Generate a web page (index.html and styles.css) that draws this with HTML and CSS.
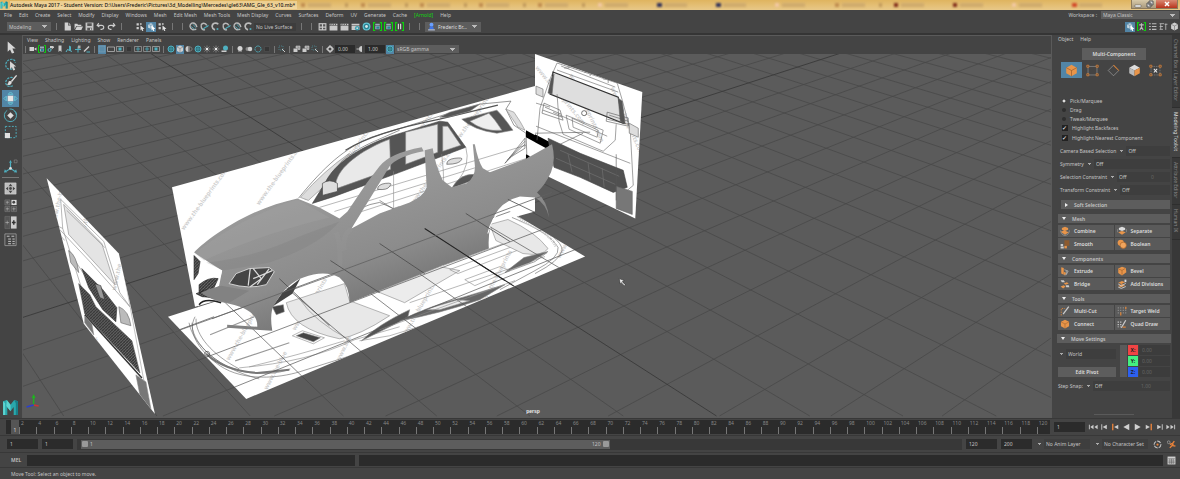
FILE: index.html
```html
<!DOCTYPE html>
<html lang="en">
<head>
  <meta charset="UTF-8">
  <title>Autodesk Maya 2017</title>
  <link rel="stylesheet" href="styles.css">
</head>
<body>
  <!-- Icon set -->
  <svg class="defs" aria-hidden="true">
    <symbol id="new" viewBox="0 0 16 16"><path d="M3 1h6v5h5v9H3z" fill="#d0d0d0"/><path d="M10 1l4 4h-4z" fill="#bbb"/></symbol>
    <symbol id="open" viewBox="0 0 16 16"><path d="M1 3h5l1 2h6v2H4l-3 6zM5 8h11l-3 6H2z" fill="#d0d0d0"/></symbol>
    <symbol id="save" viewBox="0 0 16 16"><path d="M1 1h14v14H1z" fill="#c4c4c4"/><path d="M4 2h8v5H4zM4 10h8v5H4z" fill="#555"/><path d="M9 11h2v3H9z" fill="#ddd"/></symbol>
    <symbol id="undo" viewBox="0 0 16 16"><path d="M5 2L2 6l4 3M2 6h8c5 0 5 7 0 7H8" fill="none" stroke="#ccc" stroke-width="2"/></symbol>
    <symbol id="redo" viewBox="0 0 16 16"><path d="M11 2l3 4-4 3M14 6H6c-5 0-5 7 0 7h2" fill="none" stroke="#ccc" stroke-width="2"/></symbol>
    <symbol id="pick" viewBox="0 0 16 16"><path d="M1 2h4v4H1zM7 2h3v3H7zM1 9h4v4H1z" fill="#ccc"/><path d="M8 6l7 6-3 .5 1 3-2 .5-1.500-3L8 15z" fill="#e4e4e4"/></symbol>
    <symbol id="cubes" viewBox="0 0 16 16"><path d="M2 4l5-2 4 2v5l-4 3-5-2z" fill="#c9d9e2"/><path d="M2 4l5 2v6M7 6l4-2" stroke="#467799" fill="none"/><path d="M8 6l7 6-3 .5 1 3-2 .5-1.500-3L8 15z" fill="#fff"/></symbol>
    <symbol id="magnet" viewBox="0 0 16 16"><path d="M13 13L7 14C1 12 0 5 5 2c5-1 8 3 9 7" fill="none" stroke="#b9b9b9" stroke-width="2.500"/><path d="M4 8l6 5M7 4l5 6" stroke="#4fb0c0" stroke-width="1.500"/></symbol>
    <symbol id="curve" viewBox="0 0 16 16"><path d="M2 6c1-5 8-5 10 0M2 6c0 5 3 8 7 8" fill="none" stroke="#b9b9b9" stroke-width="2.500"/><path d="M6 13c2-5 5-2 9-7" fill="none" stroke="#4fb0c0" stroke-width="2"/></symbol>
    <symbol id="hook" viewBox="0 0 16 16"><path d="M13 4C9 0 2 2 2 8c0 3 3 5 5 6" fill="none" stroke="#bbb" stroke-width="3"/><path d="M10 11h3v3h-3z" fill="#4fb0c0"/></symbol>
    <symbol id="clap" viewBox="0 0 16 16"><path d="M1 3h14v3H1zM1 7h14v8H1z" fill="#c9c9c9"/><path d="M4 3l-1 3M8 3L7 6M12 3l-1 3" stroke="#444" stroke-width="1.500"/></symbol>
    <symbol id="film" viewBox="0 0 16 16"><path d="M1 2h14v13H1z" fill="#c9c9c9"/><path d="M3 4h4v4H3zM9 4h4v4H9zM3 10h4v3H3zM9 10h4v3H9z" fill="#555"/></symbol>
    <symbol id="clapteal" viewBox="0 0 16 16"><path d="M1 3h14v3H1zM1 7h14v7H1z" fill="#c9c9c9"/><circle cx="11" cy="11" r="4" fill="#3d9fb0"/><circle cx="11" cy="11" r="1.500" fill="#ddd"/></symbol>
    <symbol id="ring" viewBox="0 0 16 16"><circle cx="8" cy="8" r="6" fill="#2b8292" stroke="#62c6d4" stroke-width="2"/><circle cx="8" cy="8" r="2.500" fill="#d8e8ea"/></symbol>
    <symbol id="gclap" viewBox="0 0 16 16"><path d="M4 3h8v3H4zM4 7h8v6H4z" fill="#9ab"/><path d="M4 1H1v14h3M12 1h3v14h-3" fill="none" stroke="#0bd30b" stroke-width="2"/><path d="M6 8h5v4H6z" fill="#278795"/></symbol>
    <symbol id="gpause" viewBox="0 0 16 16"><path d="M5 3h2v10H5zM9 3h2v10H9z" fill="#ddd"/><path d="M4 1H1v14h3M12 1h3v14h-3" fill="none" stroke="#0bd30b" stroke-width="2"/></symbol>
    <symbol id="gman" viewBox="0 0 16 16"><path d="M8 2v7M4 5h8M8 9l-3 5M8 9l3 5" stroke="#bbb" stroke-width="2" fill="none"/><path d="M4 1H1v14h3M12 1h3v14h-3" fill="none" stroke="#0bd30b" stroke-width="2"/></symbol>
    <symbol id="cam" viewBox="0 0 16 16"><path d="M1 4h9v8H1zM11 7l4-2v6l-4-2z" fill="#d0d0d0"/></symbol>
    <symbol id="camteal" viewBox="0 0 16 16"><path d="M6 2h7v4H6z" fill="#ccc"/><circle cx="5" cy="10" r="3" fill="none" stroke="#4fb0c0" stroke-width="2"/><path d="M9 8l5-4" stroke="#ccc" stroke-width="2"/></symbol>
    <symbol id="mark" viewBox="0 0 16 16"><path d="M5 1h6v13l-3-3-3 3z" fill="#ccc"/></symbol>
    <symbol id="plane" viewBox="0 0 16 16"><path d="M8 1l4 2v8l-4-1z" fill="#4fb0c0"/><path d="M2 14l3-5 9 4" stroke="#5cb8c8" stroke-width="2" fill="none"/></symbol>
    <symbol id="pan" viewBox="0 0 16 16"><path d="M2 9h12M8 3v12" stroke="#4fb0c0" stroke-width="2"/><path d="M8 1h5v6H8z" fill="#aaa"/></symbol>
    <symbol id="pencil" viewBox="0 0 16 16"><path d="M2 13L12 3" stroke="#ccc" stroke-width="3"/><path d="M7 14h7" stroke="#4fb0c0" stroke-width="2"/></symbol>
    <symbol id="sq" viewBox="0 0 16 16"><path d="M2 2h12v12H2z" fill="#5c8ca8" stroke="#85a7b9"/></symbol>
    <symbol id="gate" viewBox="0 0 16 16"><path d="M1 4h14v9H1z" fill="none" stroke="#bbb" stroke-width="1.500"/></symbol>
    <symbol id="gatedot" viewBox="0 0 16 16"><path d="M1 3h14v10H1z" fill="none" stroke="#aaa" stroke-width="1.500"/><path d="M5 5h6v6H5z" fill="#4fb0c0"/></symbol>
    <symbol id="dim" viewBox="0 0 16 16"><path d="M3 3h10v10H3z" fill="#363636" stroke="#575757"/></symbol>
    <symbol id="gatex" viewBox="0 0 16 16"><path d="M1 3h14v10H1z" fill="none" stroke="#999" stroke-width="1.500"/><path d="M4 8h8M8 3v10" stroke="#4fb0c0" stroke-width="1.500"/></symbol>
    <symbol id="globe" viewBox="0 0 16 16"><circle cx="8" cy="8" r="6" fill="#2e6b75" stroke="#4fb0c0" stroke-width="2"/><path d="M8 2v12M2 8h12" stroke="#4fb0c0"/></symbol>
    <symbol id="box" viewBox="0 0 16 16"><path d="M8 1l6 3v8l-6 3-6-3V4z" fill="#d0d0d0"/><path d="M2 4l6 3 6-3M8 7v8" stroke="#666" fill="none"/></symbol>
    <symbol id="half" viewBox="0 0 16 16"><path d="M7 2a6 6 0 0 0 0 12z" fill="#ccc"/><path d="M9 3l5 3v4l-5 3z" fill="none" stroke="#aaa"/></symbol>
    <symbol id="burst" viewBox="0 0 16 16"><circle cx="8" cy="8" r="2.500" fill="#eee"/><path d="M8 1v4M8 11v4M1 8h4M11 8h4M3 3l3 3M10 10l3 3M3 13l3-3M10 6l3-3" stroke="#bbb"/></symbol>
    <symbol id="shade" viewBox="0 0 16 16"><circle cx="9" cy="6" r="5" fill="#4fb0c0"/><path d="M1 11h10v3H1z" fill="#ccc"/></symbol>
    <symbol id="ball" viewBox="0 0 16 16"><circle cx="8" cy="7" r="5" fill="#d5d5d5"/><path d="M4 13h8" stroke="#777" stroke-width="2"/></symbol>
    <symbol id="balls" viewBox="0 0 16 16"><circle cx="5" cy="8" r="4" fill="#888"/><circle cx="10" cy="8" r="4.500" fill="#d0d0d0"/></symbol>
    <symbol id="circ" viewBox="0 0 16 16"><circle cx="8" cy="8" r="6" fill="none" stroke="#4fb0c0" stroke-width="2" stroke-dasharray="3 1"/></symbol>
    <symbol id="dash" viewBox="0 0 16 16"><path d="M2 2h8v8H2z" fill="none" stroke="#4fb0c0" stroke-dasharray="2"/><path d="M8 8l6 6" stroke="#ccc" stroke-width="2"/></symbol>
    <symbol id="layers" viewBox="0 0 16 16"><path d="M1 7h8v7H1z" fill="#ccc"/><path d="M6 2h8v7h-4V6H6z" fill="#999" stroke="#ddd"/></symbol>
    <symbol id="gear" viewBox="0 0 16 16"><circle cx="8" cy="8" r="4.500" fill="none" stroke="#ccc" stroke-width="3"/><path d="M8 0v3M8 13v3M0 8h3M13 8h3" stroke="#ccc" stroke-width="2"/></symbol>
    <symbol id="gamma" viewBox="0 0 16 16"><path d="M12 2a6 6 0 0 0 0 12z" fill="#ccc"/><path d="M1 8h5" stroke="#bbb" stroke-width="2"/></symbol>
    <symbol id="person" viewBox="0 0 16 16"><circle cx="8" cy="5" r="3.500" fill="#6aa0ff"/><path d="M5 8h6l1 5H4z" fill="#3e75ea"/><path d="M2 13h12v2H2z" fill="#b8c4dd"/></symbol>
    <symbol id="lines" viewBox="0 0 16 16"><path d="M2 3h3M7 3h8M2 8h3M7 8h8M2 13h3M7 13h8" stroke="#bbb" stroke-width="2"/></symbol>
    <symbol id="tsq" viewBox="0 0 16 16"><path d="M1 3h8M3 3v10M1 8h6M1 13h6M12 3v11M10 4h5" stroke="#bbb" stroke-width="1.500"/></symbol>
    <!-- left tool box -->
    <symbol id="arrow" viewBox="0 0 32 32"><path d="M10 3v22l5-5 4 9 5-2-4-9h7z" fill="#d6d6d6"/></symbol>
    <symbol id="lasso" viewBox="0 0 32 32"><path d="M20 25C10 29 3 21 7 12 12 2 27 3 26 12" fill="none" stroke="#4fb0c0" stroke-width="2.500" stroke-dasharray="5 2"/><path d="M15 9v17l4-4 3 7 4-2-3-7h5z" fill="#d6d6d6"/></symbol>
    <symbol id="brush" viewBox="0 0 32 32"><path d="M21 25C10 30 3 22 7 14c3-6 10-8 14-6" fill="none" stroke="#4fb0c0" stroke-width="2.500" stroke-dasharray="5 2"/><path d="M29 3L18 16" stroke="#ddd" stroke-width="3"/><path d="M12 16c5-3 8 1 6 4-3 4-7 4-10 2 4-1 3-4 4-6z" fill="#ddd"/></symbol>
    <symbol id="move" viewBox="0 0 32 32"><path d="M10 10h12v12H10z" fill="#e5e5e5"/><path d="M11 7l5-5 5 5zM11 25l5 5 5-5zM7 11l-5 5 5 5zM25 11l5 5-5 5z" fill="none" stroke="#66c5d6" stroke-width="2"/></symbol>
    <symbol id="rotate" viewBox="0 0 32 32"><path d="M16 9l7 7-7 7-7-7z" fill="#ddd"/><path d="M9 5a13 13 0 1 0 15 1M14 2a14 14 0 0 1 15 12" fill="none" stroke="#4fb0c0" stroke-width="2"/></symbol>
    <symbol id="scale" viewBox="0 0 32 32"><path d="M5 3h23v24H5z" fill="none" stroke="#4fb0c0" stroke-width="2" stroke-dasharray="4 3"/><path d="M4 17h11v11H4z" fill="#e0e0e0"/></symbol>
    <symbol id="axes" viewBox="0 0 32 32"><path d="M16 20V7M16 20l9 6M16 20l-9 6" stroke="#4fb0c0" stroke-width="2.500"/><path d="M13 8l3-6 3 6zM4 22l-2 7 7-1zM28 22l2 7-7-1z" fill="#4fb0c0"/><circle cx="16" cy="20" r="3" fill="#ddd"/><path d="M24 2h6v6h-6z" fill="none" stroke="#999"/></symbol>
    <symbol id="persp" viewBox="0 0 32 32"><path d="M4 4h24v24H4z" fill="#bdbdbd" stroke="#ddd"/><path d="M16 6l4 5h-8zM16 26l4-5h-8zM6 16l5-4v8zM26 16l-5-4v8z" fill="#444"/><circle cx="16" cy="16" r="3" fill="#444"/></symbol>
    <symbol id="four" viewBox="0 0 32 32"><path d="M4 4h11v11H4zM4 18h11v11H4zM18 18h11v11H18z" fill="#555" stroke="#888"/><path d="M18 4h11v11H18z" fill="#ddd"/><path d="M9 6v7M6 9h7M9 20v7M6 23h7M23 20v7M20 23h7" stroke="#ccc"/><circle cx="23" cy="9" r="3" fill="#444"/></symbol>
    <symbol id="two" viewBox="0 0 32 32"><path d="M4 3h11v26H4z" fill="#555" stroke="#777"/><path d="M17 3h12v26H17z" fill="#ccc"/><path d="M9 12v8M5 16h8" stroke="#ccc"/><path d="M19 16h8M23 11v10" stroke="#333" stroke-width="3"/></symbol>
    <symbol id="list" viewBox="0 0 32 32"><path d="M4 4h24v25H4z" fill="none" stroke="#aaa" stroke-width="1.500"/><path d="M8 9h6M11 15h6M11 20h6M11 25h6M18 9h6M20 15h5M20 20h5M20 25h5" stroke="#ccc" stroke-width="2"/></symbol>
    <symbol id="maya" viewBox="0 0 32 32"><path d="M2 4l7-2 7 9 7-9 7 2v26h-8V15l-6 8-6-8v15H2z" fill="#2aa8ac"/><path d="M2 4l4 4v22H2zM9 2l7 9v12L8 13z" fill="#5ed2cf"/><path d="M23 2l7 2v26h-4V8z" fill="#187e87"/></symbol>
    <!-- modeling kit -->
    <symbol id="ocube" viewBox="0 0 32 32"><path d="M16 2l13 7v14l-13 7-13-7V9z" fill="#e8954a"/><path d="M3 9l13 7 13-7M16 16v14" fill="none" stroke="#8c5426" stroke-width="1.500"/></symbol>
    <symbol id="verts" viewBox="0 0 32 32"><path d="M5 6h22v21H5z" fill="none" stroke="#999" stroke-width="1.500"/><path d="M2 3h5v5H2zM25 3h5v5h-5zM2 24h5v5H2zM25 24h5v5h-5z" fill="#444" stroke="#d98339" stroke-width="2"/></symbol>
    <symbol id="edge" viewBox="0 0 32 32"><path d="M29 16L16 29 3 16 16 3" fill="none" stroke="#aaa" stroke-width="1.500"/><path d="M16 3l13 13" stroke="#d98339" stroke-width="2.500"/></symbol>
    <symbol id="face" viewBox="0 0 32 32"><path d="M16 2l13 7-13 7L3 9z" fill="#ddd"/><path d="M3 9l13 7v14L3 23z" fill="#bababa"/><path d="M29 9l-13 7v14l13-7z" fill="#e8954a"/></symbol>
    <symbol id="uvs" viewBox="0 0 32 32"><path d="M5 6h22v21H5z" fill="none" stroke="#888" stroke-width="1.500" stroke-dasharray="4 2"/><path d="M2 3h5v5H2zM25 3h5v5h-5zM2 24h5v5H2zM25 24h5v5h-5z" fill="#444" stroke="#d98339" stroke-width="2"/><path d="M12 12l8 9M20 12l-8 9" stroke="#eee" stroke-width="2.500"/></symbol>
    <symbol id="combine" viewBox="0 0 16 16"><path d="M3 3l5-2 5 2v3L8 8 3 6zM1 9l6-2 7 3-6 4z" fill="#e8954a"/><path d="M1 7c0 4 3 8 7 8s7-4 7-8" stroke="#aaa" fill="none"/></symbol>
    <symbol id="separate" viewBox="0 0 16 16"><path d="M3 3l5-2 5 2v3L8 8 3 6z" fill="#ddd"/><path d="M2 10l6-2 6 2-6 4z" fill="#e8954a"/><path d="M1 5v5M15 5v5" stroke="#999"/></symbol>
    <symbol id="smooth" viewBox="0 0 16 16"><path d="M7 2h8v9H7z" fill="#8b5a30"/><path d="M1 8h4v3H1zM1 12h5v3H1z" fill="#ccc"/><path d="M7 11h4v4H7z" fill="#e8954a"/></symbol>
    <symbol id="boolean" viewBox="0 0 16 16"><circle cx="6" cy="6" r="5" fill="#e8954a"/><circle cx="10" cy="10" r="5" fill="#f0a55e" stroke="#a76025"/></symbol>
    <symbol id="extrude" viewBox="0 0 16 16"><path d="M2 2l4 1v11l-4-2z" fill="#e8954a"/><path d="M7 6l6 2-3 6H7M10 8v5" stroke="#ccc" fill="none"/><path d="M6 9l4 2-3 4z" fill="#e8954a"/></symbol>
    <symbol id="bevel" viewBox="0 0 16 16"><path d="M8 1l6 2 1 7-7 5-6-4V4z" fill="#e8954a"/><path d="M3 5l5 2 5-3M8 7v7" stroke="#9a5c28" fill="none"/></symbol>
    <symbol id="bridge" viewBox="0 0 16 16"><path d="M1 2h5l2 3H3zM9 10h5l1 3h-5z" fill="#ccc"/><path d="M6 7l5-2 3 2-5 2zM1 12l5-2 3 2-4 3z" fill="#e8954a"/></symbol>
    <symbol id="divide" viewBox="0 0 16 16"><path d="M2 6l6-3 5 2-6 3zM2 11l6-3 5 2-6 3z" fill="#e8954a"/><path d="M2 8l5 3 7-4M2 13l5 2 7-3" stroke="#ccc" stroke-width="1.500" fill="none"/><path d="M12 1h3v4h-3z" fill="#ddd"/></symbol>
    <symbol id="cut" viewBox="0 0 16 16"><path d="M2 15V4h6" stroke="#d98339" stroke-dasharray="2" stroke-width="1.500" fill="none"/><path d="M14 1L5 13" stroke="#ccc" stroke-width="2"/></symbol>
    <symbol id="weld" viewBox="0 0 16 16"><path d="M2 2v12M6 2v12M10 2v12M14 2v12" stroke="#bbb" stroke-dasharray="2 2"/><path d="M6 10v5M14 1v4" stroke="#d98339" stroke-width="2"/></symbol>
    <symbol id="quad" viewBox="0 0 16 16"><path d="M2 4v9M6 4v9" stroke="#ccc" stroke-width="2" stroke-dasharray="2"/><path d="M14 2L7 14" stroke="#ccc" stroke-width="2"/><path d="M9 13h5" stroke="#d98339" stroke-width="2"/></symbol>
    <!-- playback -->
    <symbol id="p1" viewBox="0 0 24 16"><path d="M3 3v10" stroke="#ccc" stroke-width="2"/><path d="M21 3l-7 5 7 5zM12 3L5 8l7 5z" fill="#ccc"/></symbol>
    <symbol id="p2" viewBox="0 0 24 16"><path d="M6 2v12" stroke="#ccc" stroke-width="2"/><path d="M17 3L8 8l9 5z" fill="#ccc"/></symbol>
    <symbol id="p3" viewBox="0 0 24 16"><path d="M6 1v14" stroke="#e8823a" stroke-width="3"/><path d="M18 3L9 8l9 5z" fill="#ccc"/></symbol>
    <symbol id="p4" viewBox="0 0 24 16"><path d="M18 1L5 8l13 7z" fill="#d0d0d0"/></symbol>
    <symbol id="orbit" viewBox="0 0 16 16"><circle cx="8" cy="8" r="6" stroke="#bbb" stroke-width="2" fill="none" stroke-dasharray="7 2"/><circle cx="8" cy="8" r="2" fill="#e8823a"/></symbol>
    <symbol id="run" viewBox="0 0 16 16"><circle cx="3" cy="4" r="2.500" fill="none" stroke="#bbb"/><path d="M13 2l-3 4-5 2M10 6l1 4 4 1M10 9l-5 5" stroke="#e8823a" stroke-width="2.500" fill="none"/></symbol>
    <symbol id="grid" viewBox="0 0 16 16"><path d="M1 1h14v14H1z" fill="#d0d0d0"/><path d="M2 5h12M2 9h12M2 12h12M5 5v9M8 5v9M11 5v9" stroke="#555"/></symbol>
  </svg>

  <header class="titlebar">
    <svg class="ico"><use href="#maya"/></svg>
    <h1>Autodesk Maya 2017 - Student Version: D:\Users\Frederic\Pictures\3d_Modelling\Mercedes\gle63\AMG_Gle_63_v10.mb*</h1>
    <div class="ghosts">
      <i></i><i></i><i></i><i></i><i></i><i class="pink"></i><i class="navy"></i><i class="navy"></i><i class="pink"></i><i></i><i class="wine"></i><i class="wine"></i><i class="pink"></i><i class="red"></i>
    </div>
    <div class="winbtns">
      <button aria-label="Minimize"><svg viewBox="0 0 12 8"><path d="M3 5h6v2H3z" fill="#fff" stroke="#555" stroke-width=".5"/></svg></button>
      <button aria-label="Restore"><svg viewBox="0 0 12 8"><path d="M5 1h4v4H5zM3 3h4v4H3z" fill="#ddd" stroke="#555"/></svg></button>
      <button class="close" aria-label="Close"><svg viewBox="0 0 12 8"><path d="M4 2l4 4M8 2L4 6" stroke="#fff" stroke-width="1.500"/></svg></button>
    </div>
  </header>

  <div class="menurow">
    <nav class="menu">
      <a href="#">File</a><a href="#">Edit</a><a href="#">Create</a><a href="#">Select</a><a href="#">Modify</a><a href="#">Display</a><a href="#">Windows</a><a href="#">Mesh</a><a href="#">Edit Mesh</a><a href="#">Mesh Tools</a><a href="#">Mesh Display</a><a href="#">Curves</a><a href="#">Surfaces</a><a href="#">Deform</a><a href="#">UV</a><a href="#">Generate</a><a href="#">Cache</a><a href="#" class="arnold">[Arnold]</a><a href="#">Help</a>
    </nav>
    <label class="workspace">Workspace : <select><option>Maya Classic</option></select></label>
  </div>

  <div class="status">
    <select class="mode" aria-label="Menu set"><option>Modeling</option></select>
    <span class="sep"></span>
    <button aria-label="New scene"><svg><use href="#new"/></svg></button>
    <button aria-label="Open scene"><svg><use href="#open"/></svg></button>
    <button aria-label="Save scene"><svg><use href="#save"/></svg></button>
    <button aria-label="Undo"><svg><use href="#undo"/></svg></button>
    <button aria-label="Redo"><svg><use href="#redo"/></svg></button>
    <span class="sep wide"></span>
    <button aria-label="Select by hierarchy"><svg><use href="#pick"/></svg></button>
    <button class="on" aria-label="Select by object"><svg><use href="#cubes"/></svg></button>
    <button aria-label="Select by component"><svg><use href="#pick"/></svg></button>
    <span class="sep"></span><span class="sep"></span>
    <button aria-label="Snap to grids"><svg><use href="#magnet"/></svg></button>
    <button aria-label="Snap to curves"><svg><use href="#curve"/></svg></button>
    <button aria-label="Snap to points"><svg><use href="#hook"/></svg></button>
    <button aria-label="Snap to center"><svg><use href="#curve"/></svg></button>
    <button aria-label="Snap to planes"><svg><use href="#magnet"/></svg></button>
    <button aria-label="Make live"><svg><use href="#hook"/></svg></button>
    <input class="live" aria-label="Live surface" value="No Live Surface" readonly>
    <span class="sep"></span><span class="sep"></span>
    <button aria-label="Open render view"><svg><use href="#film"/></svg></button>
    <button aria-label="Render frame"><svg><use href="#clap"/></svg></button>
    <button aria-label="IPR render"><svg><use href="#clap"/></svg></button>
    <button aria-label="Render settings"><svg><use href="#clapteal"/></svg></button>
    <button aria-label="Hypershade"><svg><use href="#ring"/></svg></button>
    <button aria-label="Render setup"><svg><use href="#gclap"/></svg></button>
    <button aria-label="Light editor"><svg><use href="#gclap"/></svg></button>
    <button aria-label="Pause"><svg><use href="#gpause"/></svg></button>
    <span class="sep"></span><span class="sep"></span>
    <div class="user"><svg class="ico"><use href="#person"/></svg><select aria-label="Account"><option>Frederic Br...</option></select></div>
    <div class="sidebtns">
      <button class="on" aria-label="Modeling toolkit"><svg><use href="#cubes"/></svg></button>
      <button aria-label="Human IK"><svg><use href="#gman"/></svg></button>
      <button aria-label="Attributes"><svg><use href="#lines"/></svg></button>
      <button aria-label="Tool settings"><svg><use href="#tsq"/></svg></button>
      <button aria-label="Channel box"><svg><use href="#box"/></svg></button>
    </div>
  </div>

  <main>
    <aside class="toolbox">
      <button aria-label="Select"><svg><use href="#arrow"/></svg></button>
      <button aria-label="Lasso"><svg><use href="#lasso"/></svg></button>
      <button aria-label="Paint select"><svg><use href="#brush"/></svg></button>
      <button class="on" aria-label="Move"><svg><use href="#move"/></svg></button>
      <button aria-label="Rotate"><svg><use href="#rotate"/></svg></button>
      <button aria-label="Scale"><svg><use href="#scale"/></svg></button>
      <button class="last" aria-label="Last tool"><svg><use href="#axes"/></svg></button>
      <hr>
      <button aria-label="Perspective"><svg><use href="#persp"/></svg></button>
      <button aria-label="Four view"><svg><use href="#four"/></svg></button>
      <button aria-label="Two view"><svg><use href="#two"/></svg></button>
      <button aria-label="Outliner"><svg><use href="#list"/></svg></button>
      <svg class="logo"><use href="#maya"/></svg>
    </aside>

    <section class="panel">
      <nav class="menu">
        <a href="#">View</a><a href="#">Shading</a><a href="#">Lighting</a><a href="#">Show</a><a href="#">Renderer</a><a href="#">Panels</a>
      </nav>
      <div class="viewbar">
        <span class="sep"></span>
        <button aria-label="Camera"><svg><use href="#cam"/></svg></button>
        <button aria-label="Lock camera"><svg><use href="#gclap"/></svg></button>
        <button aria-label="Camera attributes"><svg><use href="#camteal"/></svg></button>
        <button aria-label="Bookmark"><svg><use href="#mark"/></svg></button>
        <button aria-label="Image plane"><svg><use href="#plane"/></svg></button>
        <button aria-label="Pan zoom"><svg><use href="#pan"/></svg></button>
        <button aria-label="Grease pencil"><svg><use href="#pencil"/></svg></button>
        <span class="sep"></span>
        <button class="on" aria-label="Grid"><svg><use href="#sq"/></svg></button>
        <button aria-label="Film gate"><svg><use href="#gate"/></svg></button>
        <button aria-label="Resolution gate"><svg><use href="#gatedot"/></svg></button>
        <button aria-label="Gate mask"><svg><use href="#dim"/></svg></button>
        <button aria-label="Field chart"><svg><use href="#gatex"/></svg></button>
        <button aria-label="Safe action"><svg><use href="#gatex"/></svg></button>
        <button aria-label="Safe title"><svg><use href="#gatedot"/></svg></button>
        <span class="sep"></span>
        <button aria-label="Wireframe"><svg><use href="#globe"/></svg></button>
        <button class="on" aria-label="Smooth shade"><svg><use href="#box"/></svg></button>
        <button aria-label="Default material"><svg><use href="#half"/></svg></button>
        <button aria-label="Textured"><svg><use href="#globe"/></svg></button>
        <button aria-label="Use all lights"><svg><use href="#burst"/></svg></button>
        <button aria-label="Shadows"><svg><use href="#burst"/></svg></button>
        <button aria-label="Occlusion"><svg><use href="#shade"/></svg></button>
        <span class="sep"></span>
        <button aria-label="Motion blur"><svg><use href="#ball"/></svg></button>
        <button aria-label="Anti-aliasing"><svg><use href="#balls"/></svg></button>
        <button aria-label="Depth of field"><svg><use href="#circ"/></svg></button>
        <button aria-label="Isolate"><svg><use href="#dim"/></svg></button>
        <span class="sep"></span>
        <button aria-label="X-ray"><svg><use href="#dash"/></svg></button>
        <span class="sep"></span>
        <button aria-label="X-ray joints"><svg><use href="#layers"/></svg></button>
        <button aria-label="X-ray components"><svg><use href="#layers"/></svg></button>
        <button aria-label="Backfaces"><svg><use href="#dash"/></svg></button>
        <span class="sep"></span>
        <button aria-label="Exposure"><svg><use href="#gear"/></svg></button>
        <input aria-label="Exposure value" value="0.00">
        <button aria-label="Gamma"><svg><use href="#gamma"/></svg></button>
        <input aria-label="Gamma value" value="1.00">
        <button class="on" aria-label="View transform"><svg><use href="#globe"/></svg></button>
        <select aria-label="Color space"><option>sRGB gamma</option></select>
      </div>

      <!-- 3D scene -->
      <svg class="scene" viewBox="23 54 1028 362" preserveAspectRatio="xMidYMid slice">
        <defs>
          <linearGradient id="paint" gradientUnits="userSpaceOnUse" x1="340" y1="170" x2="385" y2="300">
            <stop offset="0" stop-color="#9b9b9b"/><stop offset=".4" stop-color="#929292"/><stop offset=".65" stop-color="#8c8c8c"/><stop offset="1" stop-color="#767676"/>
          </linearGradient>
          <pattern id="mesh" width="3" height="3" patternUnits="userSpaceOnUse"><path d="M0 0h3v3H0z" fill="#3a3a3a"/><path d="M0 3l3-3" stroke="#909090" stroke-width=".6"/></pattern>
          <clipPath id="ground"><path d="M169 316L247 398 585 256 505 208z"/></clipPath>
          <clipPath id="sideclip"><path d="M173 187L535 86V211L196 306z"/></clipPath>
          <clipPath id="rearclip"><path d="M535 54L642 92 635 218 535 170z"/></clipPath>
          <clipPath id="frontclip"><path d="M48 178L120 253 156 413 85 323z"/></clipPath>
          <g id="floor" fill="none">
            <path d="M-1945 415L1945-304M-1834 415L1945-304M-1723 415L1945-304M-1612 415L1945-304M-1501 415L1945-304M-1390 415L1945-304M-1279 415L1945-304M-1168 415L1945-304M-1057 415L1945-304M-946 415L1945-304M-835 415L1945-304M-724 415L1945-304M-613 415L1945-304M-502 415L1945-304M-391 415L1945-304M-169 415L1945-304M-58 415L1945-304M53 415L1945-304M164 415L1945-304M275 415L1945-304M386 415L1945-304M497 415L1945-304M608 415L1945-304M719 415L1945-304M830 415L1945-304M941 415L1945-304M1052 415L1945-304"/>
            <path d="M-28 415L-406-304M65 415L-406-304M158 415L-406-304M251 415L-406-304M344 415L-406-304M437 415L-406-304M530 415L-406-304M623 415L-406-304M809 415L-406-304M902 415L-406-304M995 415L-406-304M1088 415L-406-304M1181 415L-406-304M1274 415L-406-304M1367 415L-406-304M1460 415L-406-304M1553 415L-406-304M1646 415L-406-304M1739 415L-406-304M1832 415L-406-304M1925 415L-406-304M2018 415L-406-304M2111 415L-406-304M2204 415L-406-304M2297 415L-406-304M2390 415L-406-304M2483 415L-406-304"/>
          </g>
        </defs>
        <path d="M0 0h1200v480H0z" fill="#5b5b5b"/>
        <use href="#floor" stroke="#484848" stroke-width=".8"/>
        <path d="M-280 415L1945-304M716 415L-406-304" stroke="#3a3a3a" stroke-width=".9"/>

        <!-- side blueprint -->
        <path d="M173 187L535 86V211L196 306z" fill="#fff"/>
        <g clip-path="url(#sideclip)" fill="none" stroke="#888" stroke-width=".6">
          <g class="wm"><text transform="translate(185 230) rotate(-54)">www.the-blueprints.com</text><text transform="translate(260 205) rotate(-54)">www.the-blueprints.com</text><text transform="translate(334 181) rotate(-54)">www.the-blueprints.com</text><text transform="translate(398 163) rotate(-54)">www.the-blueprints.com</text><text transform="translate(412 207) rotate(-54)">www.the-blueprints.com</text><text transform="translate(455 146) rotate(-54)">www.the-blueprints.com</text></g>
          <path d="M299 198C325 166 345 148 372 137L440 116 480 104 511 101 506 109 514 125 526 133 527 158M306 199C330 170 347 153 375 141L400 130" stroke="#555"/>
          <path d="M346 150Q375 132 440 119L498 105" stroke="#555" stroke-width="1.200"/>
          <path d="M301 197Q325 170 350 153 334 168 328 183L309 200z" fill="#ddd"/>
          <path d="M313 203L326 182C335 163 360 147 391 136L440 121 448 122 466 147 400 172 335 196z" fill="#555" stroke="#444"/>
          <path d="M335 189L337 180C342 163 368 147 390 139L391 169z" fill="#e9e9e9"/>
          <path d="M406 132L438 124V152L406 164zM443 126L448 126 461 145 443 151z" fill="#e6e6e6"/>
          <path d="M462 119L497 110C503 116 508 123 513 130L497 133Q474 130 462 119z" fill="#555"/>
          <path d="M470 121L489 113Q495 119 502 130 484 132 470 121z" fill="#eee"/>
          <path d="M323 183q7-5 15 0v8l-15 4z" fill="#ddd" stroke="#333"/>
          <path d="M440 117L450 112 480 104 470 111 448 117z" fill="#555"/>
          <path d="M320 207L526 145M335 211L480 166M350 215L527 158M394 171V208L400 206M442 154Q444 170 444 184M466 147Q471 164 458 181"/>
          <path d="M447 164q0-5 8-6t7 1q-2 5-15 5zM378 189q0-5 8-6t4 3q-2 4-12 3z" fill="#ddd" stroke="#444"/>
          <path d="M505 163L525 138V148L512 156zM507 160L525 144M509 158L525 141" stroke="#555"/>
          <path d="M506 109L514 112Q521 122 525 130L518 127z" fill="#ddd"/>
          <path d="M452 188Q460 173 475 174L473 180z" fill="#555"/>
          <path d="M345 219Q360 205 380 202L396 209M380 200L396 210" stroke="#555"/>
        </g>
        <path d="M526 130L550 143 548 149 526 137zM526 154L530 156 526 160zM551 165L554 163V175L548 177z" fill="#000"/>

        <!-- rear blueprint -->
        <path d="M535 54L642 92 635 218 535 170z" fill="#fff"/>
        <path d="M535 134L550 142 548 149 535 142z" fill="#000"/>
        <g clip-path="url(#rearclip)" fill="none" stroke="#666" stroke-width=".6">
          <g class="wm"><text transform="translate(535 68) rotate(50)">www.the-blueprints.com</text><text transform="translate(569 75) rotate(65)">www.the-blueprints.com</text><text transform="translate(610 88) rotate(66)">www.the-blueprints.com</text></g>
          <path d="M557 63L617 83 622 100 630 130 633 185 627 190M557 63L550 79 540 108 537 140M561 66L615 87M557 70L618 92"/>
          <path d="M553 72L618 97 623 123 550 94z" fill="#dedede" stroke="#333" stroke-width="1.200"/>
          <path d="M551 79L554 74 552 94 548 93zM618 98L622 101 625 124 620 121z" fill="#555"/>
          <path d="M564 64h5v4h-5M584 72h6v4M603 79h5v4"/>
          <path d="M544 103L560 110 563 120 542 113zM545 107L561 114M543 110L562 117M607 112L628 118 628 126 606 121zM609 115L628 121M607 119L628 124" stroke="#555"/>
          <path d="M572 118L598 130 597 137 573 127zM566 115L603 130 600 143 569 129zM536 126L566 138 630 163M557 94L559 121 563 134 603 151 615 140 616 124M536 103L550 107M553 112L607 136"/>
          <path d="M536 86L543 89 543 97 536 94zM629 123L638 128 638 137 629 133z" fill="#ddd"/>
          <path d="M548 138L580 153 623 170 627 187 613 192 580 177 554 167 550 150z" fill="#505050" stroke="#444"/>
          <path d="M560 150L619 176M556 158L615 184M568 154L572 172M588 163L590 180M602 168L604 187" stroke="#777"/>
          <path d="M616 186L632 191V214L616 208z" fill="#777"/>
          <circle cx="584" cy="113" r="2.500" stroke="#222"/>
          <path d="M535 133L590 132M558 145L583 133M616 154V200" stroke="#555"/>
        </g>

        <!-- front blueprint -->
        <path d="M48 178L120 253 156 413 85 323z" fill="#fff"/>
        <g clip-path="url(#frontclip)" fill="none" stroke="#888" stroke-width=".6">
          <g class="wm"><text transform="translate(57 224) rotate(-78)">www.the-blueprints</text><text transform="translate(84 240) rotate(-76)">www.the</text><text transform="translate(117 290) rotate(-78)">www.the</text><text transform="translate(95 337) rotate(80)">www</text></g>
          <path d="M65 204L103 243 116 284 70 234z" fill="#e4e4e4"/>
          <path d="M62 199L105 241 121 292 131 306M62 199L64 228 82 285 88 322M61 229L92 262 131 306M70 250L86 275M64 228L60 226V233L66 240M68 210L106 247"/>
          <path d="M70 250Q78 255 80 272L72 262zM120 306Q130 310 132 325L122 322z" fill="#bbb" stroke="#666"/>
          <path d="M83 268L104 289 118 307 117 321 104 309 90 287z" fill="url(#mesh)" stroke="#333"/>
          <path d="M80 283L91 294 97 306 133 340 141 372 86 313z" fill="url(#mesh)" stroke="#555"/>
          <path d="M96 283l6 2 4 14-5-2z" fill="#999" stroke="#333"/>
          <path d="M86 314L143 377" stroke="#333" stroke-width="1.500"/>
          <path d="M137 374L147 381 152 408 141 394zM86 315L93 323 95 334 86 322z" fill="#777"/>
          <path d="M122 256L145 380" stroke="#999"/>
        </g>

        <!-- top blueprint on the floor -->
        <path d="M169 316L247 398 585 256 505 208z" fill="#fff"/>
        <g clip-path="url(#ground)" fill="none" stroke="#888" stroke-width=".6">
          <g class="wm"><text transform="translate(230 360) rotate(-60)">www.the-blueprints.com</text><text transform="translate(268 389) rotate(-62)">www.the-blue</text><text transform="translate(296 330) rotate(-58)">www.the-blueprints</text><text transform="translate(340 361) rotate(-64)">www.the-blueprints</text><text transform="translate(405 337) rotate(-60)">www.the-blueprints</text><text transform="translate(484 304) rotate(-62)">www.the-blueprints</text><text transform="translate(523 247) rotate(-62)">www</text><text transform="translate(560 258) rotate(-62)">www</text></g>
          <path d="M196 316C187 332 202 352 221 365 245 381 280 377 300 371L430 330 520 293M193 322C192 340 214 362 238 369 255 375 280 373 291 368M197 318C196 334 213 354 240 368M190 322C194 344 220 368 260 378" stroke="#666"/>
          <path d="M207 353Q225 370 258 372L290 369" stroke="#777" stroke-width="2"/>
          <circle cx="208" cy="353" r="2.500" stroke="#333"/>
          <path d="M240 367Q310 361 355 339L400 326M250 366Q300 354 345 340"/>
          <path d="M236 360L290 342M211 334L255 316" stroke="#999" stroke-width="1.200"/>
          <path d="M287 302Q292 328 340 338 360 335 390 315L350 300 345 283Z" fill="#e8e8e8"/>
          <path d="M300 298Q315 321 350 339"/>
          <path d="M293 335L303 330 325 337 314 343z" fill="#fff"/><path d="M297 335L304 332 321 337 314 341z" fill="#444"/>
          <path d="M273 306L284 304 285 311 277 314z" fill="#444"/>
          <path d="M362 340Q378 324 410 309L408 317z" fill="#555"/>
          <path d="M400 320Q430 305 465 296L505 284 480 299Q440 313 400 320z" fill="#666"/>
          <path d="M425 309L458 299 470 300 440 309zM470 296L495 287" fill="#eee"/>
          <path d="M378 291L440 266 460 270 405 302z" fill="#ececec"/>
          <path d="M443 265L512 240M450 269L518 244 522 248 458 273zM410 302L545 256M380 329L515 280M360 340L390 335 470 310M465 279L500 266 510 270 475 285z"/>
          <path d="M490 224L508 219Q535 231 548 248 543 256 523 253L496 240z" fill="#e8e8e8"/>
          <path d="M512 217Q550 232 558 247 560 257 535 270L500 289M517 216Q563 237 562 250 560 260 535 273M524 258L547 252 535 261 505 272z" stroke="#666"/>
          <path d="M524 257L548 251 530 262 506 271z" fill="#666"/>
          <path d="M520 220Q548 230 556 246" stroke="#ccc" stroke-width="3" stroke-dasharray="1"/>
        </g>
        <g clip-path="url(#ground)"><use href="#floor" stroke="#555" stroke-width=".7"/><path d="M716 415L-406-304" stroke="#222"/></g>

        <!-- car body -->
        <path d="M301 278L293 293 273 306 283 292z" fill="#444"/>
        <path d="M195 252C203 243 222 229 243 218 262 208 280 202 298 198L320 207 340 218 348 211 367 183 380 166Q390 153 422 147L424 151Q398 156 390 166L381 181 352 228 380 213 410 202Q424 196 427 187L425 150 433 148Q435 163 443 180L452 187 467 183Q476 176 475 165L473 144 475 144Q478 160 483 168L490 172 527 158 552 144Q556 160 551 172 545 185 537 192 547 200 549 217 546 203 535 197L520 196Q497 202 491 224 488 236 489 248L440 266 350 302Q350 285 340 277 325 269 304 277 288 282 275 304 270 312 273 330L257 329 228 327V324L258 326Q259 309 230 303 210 299 202 292 219 291 223 270 210 262 195 252z" fill="url(#paint)"/>
        <path d="M196 253C222 231 262 210 298 199L330 217Q260 234 205 260z" fill="#a4a4a4" opacity=".35"/>
        <path d="M207 262Q255 257 300 236L340 221Q320 245 270 262L224 270z" fill="#757575" opacity=".2"/>
        <path d="M337 232Q342 247 340 270M352 228Q342 235 345 250" fill="none" stroke="#a4a4a4" stroke-width="5" opacity=".15"/>
        <path d="M195 252L207 263 223 270 220 285 206 294 199 306 193 282z" fill="#fff"/>
        <path d="M195 255l6 6-2 12-4 6zM200 284Q210 276 219 278L214 289 200 292zM197 293l10-4 8 8-12-1z" fill="url(#mesh)" stroke="#222" stroke-width=".6"/>
        <path d="M200 304Q205 297 222 302" stroke="#222" stroke-width="1.500" fill="none"/>
        <path d="M202 292Q212 287 222 285L250 290 230 302Q212 300 202 292z" fill="#828282"/>
        <path d="M230 283L237 273 250 268 270 267 275 271 267 284Q250 289 230 283z" fill="#454545" stroke="#eee" stroke-width=".8"/>
        <path d="M251 268L249 285M254 268L262 278 251 286M270 268L258 284M254 278L273 270" stroke="#ddd" stroke-width="1.200" fill="none"/>
        <path d="M505 205Q491 218 488 233" stroke="#fff" fill="none"/>
        <path d="M280 278L330 325M331 260L380 292M380 243L425 273M466 213L510 241M508 199L535 212" stroke="#4a4a4a" stroke-width=".8" fill="none"/>
        <path d="M425 228L505 280" stroke="#222"/>
        <path d="M213 318L552 192M175 331L215 316" stroke="#606060" stroke-width=".8" fill="none"/>

        <path d="M35 404V395" stroke="#22b022" stroke-width="1.500"/><path d="M35 404l5 1" stroke="#c33" stroke-width="1.500"/><path d="M35 404l-7 2" stroke="#2a3fd0" stroke-width="1.500"/>
        <path d="M33 397l2-4 2 4z" fill="#22b022"/>
        <path d="M619 278l5 2-2 1 3 3-1 1-3-3-1 1z" fill="#eee" stroke="#222" stroke-width=".5"/>
        <text class="camname" x="533" y="412">persp</text>
      </svg>
    </section>

    <aside class="kit">
      <nav class="menu"><a href="#">Object</a><a href="#">Help</a></nav>
      <button class="multi">Multi-Component</button>
      <div class="comps">
        <button class="on" aria-label="Object"><svg><use href="#ocube"/></svg></button>
        <button aria-label="Vertex"><svg><use href="#verts"/></svg></button>
        <button aria-label="Edge"><svg><use href="#edge"/></svg></button>
        <button aria-label="Face"><svg><use href="#face"/></svg></button>
        <button aria-label="UV"><svg><use href="#uvs"/></svg></button>
      </div>
      <div class="picks">
        <label><input type="radio" name="pick" checked>Pick/Marquee</label>
        <label><input type="radio" name="pick">Drag</label>
        <label><input type="radio" name="pick">Tweak/Marquee</label>
        <label class="tick"><input type="checkbox" checked>Highlight Backfaces</label>
        <label><input type="checkbox" checked>Highlight Nearest Component</label>
      </div>
      <div class="opts">
        <label>Camera Based Selection <select><option>Off</option></select></label>
        <label>Symmetry <select><option>Off</option></select></label>
        <div class="pair"><label>Selection Constraint <select><option>Off</option></select></label><input aria-label="Constraint angle" value="0"></div>
        <label>Transform Constraint <select><option>Off</option></select></label>
      </div>
      <h2 class="soft shut">Soft Selection</h2>
      <h2>Mesh</h2>
      <div class="cmds">
        <button><svg><use href="#combine"/></svg>Combine</button><button><svg><use href="#separate"/></svg>Separate</button>
        <button><svg><use href="#smooth"/></svg>Smooth</button><button><svg><use href="#boolean"/></svg>Boolean</button>
      </div>
      <h2>Components</h2>
      <div class="cmds">
        <button><svg><use href="#extrude"/></svg>Extrude</button><button><svg><use href="#bevel"/></svg>Bevel</button>
        <button><svg><use href="#bridge"/></svg>Bridge</button><button><svg><use href="#divide"/></svg>Add Divisions</button>
      </div>
      <h2>Tools</h2>
      <div class="cmds">
        <button><svg><use href="#cut"/></svg>Multi-Cut</button><button><svg><use href="#weld"/></svg>Target Weld</button>
        <button><svg><use href="#ocube"/></svg>Connect</button><button><svg><use href="#quad"/></svg>Quad Draw</button>
      </div>
      <h2 class="movehead">Move Settings</h2>
      <div class="moveset">
        <div class="pivot">
          <select aria-label="Axis orientation"><option>World</option></select>
          <button>Edit Pivot</button>
        </div>
        <div class="xyz">
          <label class="x"><b>X:</b><input value="0.00"></label>
          <label class="y"><b>Y:</b><input value="0.00"></label>
          <label class="z"><b>Z:</b><input value="0.00"></label>
        </div>
      </div>
      <div class="pair step"><label>Step Snap: <select><option>Off</option></select></label><input aria-label="Step size" value="1.00"></div>
      <div class="grip"></div>
    </aside>

    <nav class="tabs">
      <a href="#">Channel Box / Layer Editor</a>
      <a href="#" class="current">Modeling Toolkit</a>
      <a href="#">Attribute Editor</a>
      <a href="#">Human IK</a>
    </nav>
  </main>

  <!-- Time slider -->
  <div class="time">
    <div class="track">
      <span class="now">1</span>
      <ol>
        <li>2</li><li>4</li><li>6</li><li>8</li><li>10</li><li>12</li><li>14</li><li>16</li><li>18</li><li>20</li><li>22</li><li>24</li><li>26</li><li>28</li><li>30</li><li>32</li><li>34</li><li>36</li><li>38</li><li>40</li><li>42</li><li>44</li><li>46</li><li>48</li><li>50</li><li>52</li><li>54</li><li>56</li><li>58</li><li>60</li><li>62</li><li>64</li><li>66</li><li>68</li><li>70</li><li>72</li><li>74</li><li>76</li><li>78</li><li>80</li><li>82</li><li>84</li><li>86</li><li>88</li><li>90</li><li>92</li><li>94</li><li>96</li><li>98</li><li>100</li><li>102</li><li>104</li><li>106</li><li>108</li><li>110</li><li>112</li><li>114</li><li>116</li><li>118</li><li class="end">120</li>
      </ol>
    </div>
    <input aria-label="Current frame" value="1">
    <div class="play">
      <button aria-label="Go to start"><svg><use href="#p1"/></svg></button>
      <button aria-label="Step back"><svg><use href="#p2"/></svg></button>
      <button aria-label="Previous key"><svg><use href="#p3"/></svg></button>
      <button aria-label="Play backwards"><svg><use href="#p4"/></svg></button>
      <button class="flip" aria-label="Play"><svg><use href="#p4"/></svg></button>
      <button class="flip" aria-label="Next key"><svg><use href="#p3"/></svg></button>
      <button class="flip" aria-label="Step forward"><svg><use href="#p2"/></svg></button>
      <button class="flip" aria-label="Go to end"><svg><use href="#p1"/></svg></button>
    </div>
  </div>

  <div class="range">
    <input aria-label="Animation start" value="1">
    <input aria-label="Playback start" value="1">
    <div class="slider"><div class="bar"><i></i><span>1</span><span class="to">120</span><i></i></div></div>
    <input aria-label="Playback end" value="120">
    <input aria-label="Animation end" value="200">
    <select class="layer" aria-label="Anim layer"><option>No Anim Layer</option></select>
    <select class="charset" aria-label="Character set"><option>No Character Set</option></select>
    <button aria-label="Auto key"><svg><use href="#orbit"/></svg></button>
    <button aria-label="Preferences"><svg><use href="#run"/></svg></button>
  </div>

  <div class="mel">
    <label for="cmd">MEL</label>
    <input id="cmd">
    <output></output>
    <button aria-label="Script editor"><svg><use href="#grid"/></svg></button>
  </div>

  <footer>Move Tool: Select an object to move.</footer>
</body>
</html>
```
FILE: styles.css
```css
* {
  box-sizing: border-box;
}
body {
  margin: 0;
  min-height: 100vh;
  display: flex;
  flex-direction: column;
  background: #444;
  color: #c4c4c4;
  font: 5px/8px "Noto Sans", "Open Sans", sans-serif;
}
button, input, select {
  font: inherit;
  color: inherit;
  margin: 0;
  padding: 0;
  border: 0;
  border-radius: 0;
  background: none;
  min-width: 0;
}
button {
  display: flex;
  align-items: center;
  justify-content: center;
}
a {
  color: inherit;
  text-decoration: none;
}
input {
  background: #2b2b2b;
  padding: 0 3px;
}
select {
  appearance: none;
  background:
    linear-gradient(#bbb, #bbb) no-repeat right 4px top 3px / 5px 1px,
    linear-gradient(#bbb, #bbb) no-repeat right 5px top 4px / 3px 1px,
    linear-gradient(#bbb, #bbb) no-repeat right 6px top 5px / 1px 1px,
    #5d5d5d;
  padding: 0 9px 0 2px;
}
.defs {
  position: absolute;
  width: 0;
  height: 0;
}
.on {
  background: #5285a6;
}
.ico {
  width: 8px;
  height: 8px;
  flex: none;
}
.sep {
  width: 1px;
  height: 7px;
  background: #777;
}

/* Title bar */
.titlebar {
  height: 10px;
  display: flex;
  align-items: center;
  background: linear-gradient(#dfb45f, #e8c888);
}
.titlebar h1 {
  margin: 0 4px 0 2px;
  padding: 0 2px 0 0;
  font-size: 5px;
  font-weight: 500;
  color: #111;
  white-space: nowrap;
  background: rgba(255, 240, 205, 0.4);
}
.ghosts {
  flex: 1;
  display: flex;
  height: 8px;
  align-items: center;
  filter: blur(1px);
}
.ghosts i {
  flex: 1;
  height: 4px;
  background: linear-gradient(90deg, #c08d50 4px, transparent 4px 7px, #cfab6d 7px 30px, transparent 30px 44px, #c09a5c 44px 47px, transparent 47px);
}
.ghosts .navy {
  background: linear-gradient(90deg, #34345a 5px, transparent 5px 7px, #cfab6d 7px 30px, transparent 30px);
}
.ghosts .wine {
  background: linear-gradient(90deg, #82301c 4px, transparent 4px 7px, #cfab6d 7px 30px, transparent 30px);
}
.ghosts .pink {
  background: linear-gradient(90deg, #f0c7a0 4px, transparent 4px 7px, #cfab6d 7px 30px, transparent 30px);
}
.ghosts .red {
  background: linear-gradient(90deg, #d2492a 5px, transparent 5px 7px, #cfab6d 7px 30px, transparent 30px);
}
.winbtns {
  display: flex;
  align-self: flex-start;
  margin-right: 2px;
  border: 1px solid #8d7a5c;
  border-top: 0;
}
.winbtns button {
  width: 12px;
  height: 8px;
  background: linear-gradient(#d8c9a8, #a99a7e);
}
.winbtns svg {
  width: 12px;
  height: 8px;
}
.winbtns .close {
  width: 21px;
  background: linear-gradient(#d98972, #b8341d);
}

/* Menus */
.menurow {
  height: 10px;
  display: flex;
  align-items: center;
  justify-content: space-between;
}
.menu {
  display: flex;
  gap: 7px;
  padding-left: 4px;
  white-space: nowrap;
}
.arnold {
  color: #12d412;
}
.workspace {
  display: flex;
  align-items: center;
  gap: 4px;
  margin-right: 1px;
}
.workspace select {
  width: 78px;
  height: 8px;
}

/* Status line */
.status {
  height: 13px;
  display: flex;
  align-items: center;
  gap: 1px;
  padding-left: 7px;
}
.status button {
  width: 10px;
  height: 10px;
}
.status svg {
  width: 9px;
  height: 9px;
}
.status .sep {
  margin: 0 4px;
}
.status .wide {
  margin-right: 12px;
}
.mode {
  width: 44px;
  height: 9px;
}
.live {
  width: 42px;
  height: 8px;
  padding: 0 2px;
  background: #3d3d3d;
}
.user {
  display: flex;
  align-items: center;
  background: #5d5d5d;
  padding-left: 2px;
}
.user select {
  width: 45px;
  height: 10px;
  color: #ddd;
}
.sidebtns {
  display: flex;
  margin-left: auto;
  gap: 1px;
  margin-right: 1px;
}

/* Middle */
main {
  flex: 1;
  display: flex;
  min-height: 0;
  border-top: 2px solid #353535;
}
.toolbox {
  width: 22px;
  display: flex;
  flex-direction: column;
  align-items: center;
  padding: 4px 2px 0 0;
}
.toolbox button {
  width: 17px;
  height: 17px;
}
.toolbox svg {
  width: 15px;
  height: 15px;
}
.toolbox .last {
  margin-top: 17px;
}
.toolbox hr {
  width: 17px;
  height: 1px;
  margin: 2px 0;
  border: 0;
  background: #777;
}
.toolbox .logo {
  width: 17px;
  height: 17px;
  margin: auto 0 2px;
}
.panel {
  flex: 1;
  min-width: 0;
  display: flex;
  flex-direction: column;
  border: 1px solid #5a5a5a;
}
.panel .menu {
  height: 8px;
}
.viewbar {
  height: 10px;
  display: flex;
  align-items: center;
  gap: 1px;
}
.viewbar .sep {
  margin: 0 2px;
}
.viewbar button {
  width: 8px;
  height: 9px;
}
.viewbar svg {
  width: 8px;
  height: 8px;
}
.viewbar input {
  width: 20px;
  height: 8px;
}
.viewbar select {
  width: 64px;
  height: 8px;
}
.scene {
  flex: 1;
  width: 100%;
  height: 0;
  min-height: 0;
  display: block;
}
.wm text {
  font: 700 6px "Open Sans", sans-serif;
  fill: #cfcfcf;
  stroke: none;
}
.camname {
  font: 700 5px "Liberation Sans", sans-serif;
  fill: #eee;
  text-anchor: middle;
}

/* Modeling toolkit */
.kit {
  width: 120px;
  display: flex;
  flex-direction: column;
  padding: 0 2px 0 6px;
}
.kit .menu {
  padding-left: 0;
}
.multi {
  width: 64px;
  height: 12px;
  margin: 5px 0 2px 24px;
  background: #5d5d5d;
  color: #ddd;
  font-weight: 600;
}
.comps {
  display: flex;
  padding-left: 3px;
}
.comps button {
  width: 21px;
  height: 16px;
}
.comps svg {
  width: 13px;
  height: 13px;
}
.picks {
  margin-top: 18px;
  padding-left: 4px;
}
.picks label {
  height: 9px;
  display: flex;
  align-items: center;
  gap: 4px;
}
.picks .tick {
  height: 10px;
}
.picks input {
  appearance: none;
  width: 4px;
  height: 4px;
  padding: 0;
  border-radius: 2px;
  background: #2e2e2e;
}
.picks input:checked {
  background: radial-gradient(#ddd 1px, #2b2b2b 2px);
}
.picks input[type=checkbox] {
  width: 6px;
  height: 6px;
  border-radius: 0;
  background: #222;
}
.picks input[type=checkbox]:checked::before {
  content: "✓";
  display: block;
  color: #fff;
  font: 700 6px/6px "DejaVu Sans", sans-serif;
}
.opts {
  display: flex;
  flex-direction: column;
  gap: 3px;
  margin: 4px 0 5px;
  padding-left: 2px;
}
.kit .opts label, .kit .step label {
  flex: 1;
  display: flex;
  align-items: center;
  gap: 2px;
  height: 10px;
  white-space: nowrap;
}
.opts select, .step select, .pivot select, .layer, .charset {
  flex: 1;
  height: 10px;
  padding: 0 0 0 10px;
  background:
    linear-gradient(#aaa, #aaa) no-repeat 2px 4px / 3px 1px,
    linear-gradient(#aaa, #aaa) no-repeat 3px 5px / 1px 1px,
    linear-gradient(90deg, transparent 8px, #3e3e3e 8px);
}
.pair {
  display: flex;
}
.pair input {
  width: 22px;
  background: #3e3e3e;
  color: #666;
}
.kit h2 {
  display: flex;
  align-items: center;
  gap: 6px;
  height: 9px;
  margin: 0;
  padding-left: 4px;
  font-size: 5px;
  font-weight: 600;
  background: #5d5d5d;
}
.kit h2::before {
  content: "";
  border: 2px solid transparent;
  border-top: 3px solid #eee;
  border-bottom: 0;
}
.kit h2.soft {
  margin: 0 0 5px 3px;
}
.kit h2.shut::before {
  border: 2px solid transparent;
  border-left: 3px solid #eee;
  border-right: 0;
}
.cmds {
  display: grid;
  grid-template-columns: 1fr 1fr;
  gap: 1px;
  margin: 2px 0 4px;
}
.cmds button {
  height: 12px;
  justify-content: flex-start;
  gap: 4px;
  padding-left: 2px;
  background: #5a5a5a;
  color: #ddd;
  font-weight: 600;
}
.cmds svg {
  width: 10px;
  height: 10px;
}
.kit .movehead {
  margin: 0 -1px;
}
.moveset {
  display: flex;
  gap: 4px;
  margin-top: 2px;
}
.pivot {
  flex: 1;
  display: flex;
  flex-direction: column;
  justify-content: space-between;
  padding-top: 4px;
}
.pivot select {
  flex: none;
}
.pivot button {
  height: 10px;
  background: #5d5d5d;
  color: #ddd;
  font-weight: 600;
}
.xyz {
  width: 50px;
  display: flex;
  flex-direction: column;
  gap: 1px;
  padding-left: 8px;
  background: linear-gradient(90deg, #5a5a5a 7px, transparent 7px);
}
.xyz label {
  display: flex;
  height: 10px;
  gap: 1px;
}
.xyz b {
  width: 10px;
  text-align: center;
  line-height: 10px;
  color: #222;
}
.xyz input {
  flex: 1;
  width: 0;
  color: #666;
  background: #3c3c3c;
}
.x b { background: #f04444; }
.y b { background: #44f080; }
.z b { background: #2d60f0; }
.step {
  margin-top: 4px;
}
.step input {
  width: 32px;
}
.grip {
  width: 40px;
  height: 1px;
  margin: auto auto 3px;
  background: #5a5a5a;
}
.tabs {
  width: 8px;
  display: flex;
  flex-direction: column;
  background: #383838;
  color: #8a8a8a;
}
.tabs a {
  writing-mode: vertical-rl;
  white-space: nowrap;
  padding: 4px 0 6px;
  border-bottom: 1px solid #2e2e2e;
}
.tabs .current {
  background: #444;
  color: #ddd;
}

/* Time slider */
.time {
  height: 17px;
  display: flex;
  align-items: center;
  border-top: 1px solid #383838;
  padding-left: 6px;
}
.track {
  flex: 1;
  height: 14px;
  display: flex;
  background: #2b2b2b;
}
.now {
  width: 8px;
  height: 14px;
  margin-left: 5px;
  padding-top: 6px;
  text-align: center;
  background: #555;
  color: #ddd;
}
.track ol {
  flex: 1;
  display: flex;
  margin: 0;
  padding: 0;
  list-style: none;
  color: #888;
}
.track li {
  flex: 1;
  width: 0;
  padding-left: 2px;
  line-height: 6px;
  background: linear-gradient(#777, #777) no-repeat 0 7px / 1px 7px;
}
.track .end {
  flex: none;
  width: 13px;
}
.time input {
  width: 31px;
  height: 10px;
  margin: 0 3px 0 4px;
}
.play {
  display: flex;
  margin-right: 4px;
}
.play button {
  width: 11px;
  height: 10px;
}
.play svg {
  width: 11px;
  height: 8px;
}
.flip {
  transform: scaleX(-1);
}

/* Range slider */
.range {
  height: 17px;
  display: flex;
  align-items: center;
  gap: 4px;
  padding: 0 4px 0 7px;
  border-top: 1px solid #383838;
}
.range input {
  width: 31px;
  height: 10px;
}
.range svg {
  width: 9px;
  height: 9px;
}
.range button {
  width: 10px;
}
.slider {
  flex: 1;
  height: 11px;
  padding: 1px 0 1px 4px;
  background: #383838;
}
.bar {
  width: 60%;
  height: 9px;
  display: flex;
  align-items: center;
  gap: 2px;
  padding: 0 1px;
  background: #5d5d5d;
}
.bar i {
  width: 6px;
  height: 6px;
  border-radius: 1px;
  background: #999;
}
.to {
  margin-left: auto;
}
.layer, .charset {
  flex: none;
  width: 54px;
}

/* Command line */
.mel {
  height: 15px;
  display: flex;
  align-items: center;
  gap: 4px;
  padding: 0 4px 0 11px;
  border-top: 1px solid #383838;
  font-weight: 600;
}
.mel input {
  flex: 2;
  height: 11px;
  margin-left: 2px;
}
.mel output {
  flex: 5;
  height: 11px;
  background: #2b2b2b;
}
.mel button, .mel svg {
  width: 9px;
  height: 9px;
}
footer {
  height: 12px;
  padding: 2px 0 0 11px;
  border-top: 1px solid #383838;
}
```
